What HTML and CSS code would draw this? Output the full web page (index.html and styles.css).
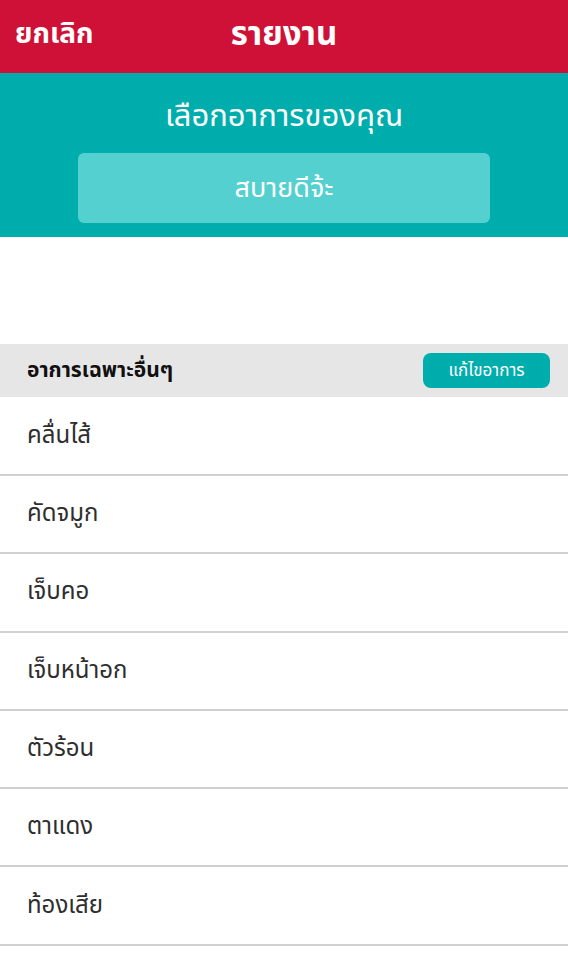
FILE: index.html
```html
<!DOCTYPE html>
<html lang="th">
<head>
  <meta charset="UTF-8" />
  <meta name="viewport" content="width=device-width, initial-scale=1.0" />
  <title>รายงาน</title>
  <link rel="stylesheet" href="styles.css">
</head>
<body>
  <header class="topbar">
    <span class="cancel">ยกเลิก</span>
    <h1 class="title">รายงาน</h1>
  </header>
  <section class="mood">
    <h2>เลือกอาการของคุณ</h2>
    <button type="button" class="mood-btn">สบายดีจ้ะ</button>
  </section>
  <div class="spacer"></div>
  <div class="section-head">
    <strong>อาการเฉพาะอื่นๆ</strong>
    <button type="button" class="edit-btn">แก้ไขอาการ</button>
  </div>
  <ul class="symptoms">
    <li>คลื่นไส้</li>
    <li>คัดจมูก</li>
    <li>เจ็บคอ</li>
    <li>เจ็บหน้าอก</li>
    <li>ตัวร้อน</li>
    <li>ตาแดง</li>
    <li>ท้องเสีย</li>
  </ul>
</body>
</html>
```
FILE: styles.css
```css
body {
  font-family: "Noto Sans Thai", "Noto Sans", "Liberation Sans", sans-serif;
  margin: 0;
  background-color: #ffffff;
  color: #2b2b2b;
}
.topbar {
  position: relative;
  height: 73px;
  background-color: #d01137;
  color: #ffffff;
  display: flex;
  align-items: center;
  justify-content: center;
}
.cancel {
  position: absolute;
  left: 15px;
  top: 14px;
  font-size: 28px;
  line-height: 42px;
  font-weight: bold;
}
.title {
  margin: 0 0 4px;
  font-size: 33px;
  font-weight: bold;
}
.mood {
  height: 164px;
  box-sizing: border-box;
  background-color: #00adad;
  padding-top: 21px;
  display: flex;
  flex-direction: column;
  align-items: center;
}
.mood h2 {
  margin: 0 0 14px;
  font-size: 31px;
  font-weight: normal;
  color: #ffffff;
  line-height: 45px;
}
.mood-btn {
  width: 412px;
  height: 70px;
  border: none;
  border-radius: 6px;
  background-color: #53d0cf;
  color: #ffffff;
  font-family: inherit;
  font-size: 27px;
}
.spacer {
  height: 107px;
}
.section-head {
  height: 53px;
  background-color: #e6e6e6;
  display: flex;
  align-items: center;
  justify-content: space-between;
  padding: 0 18px 0 27px;
}
.section-head strong {
  font-size: 21px;
  color: #111111;
}
.edit-btn {
  width: 127px;
  height: 35px;
  border: none;
  border-radius: 8px;
  background-color: #00adad;
  color: #ffffff;
  font-family: inherit;
  font-size: 17px;
}
.symptoms {
  list-style: none;
  margin: 0;
  padding: 0;
}
.symptoms li {
  height: 76.3px;
  border-bottom: 2px solid #d0d0d0;
  padding-left: 27px;
  display: flex;
  align-items: center;
  font-size: 24px;
  line-height: 1;
  color: #2e2e2e;
}
.symptoms li:first-child {
  height: 77px;
}
```
